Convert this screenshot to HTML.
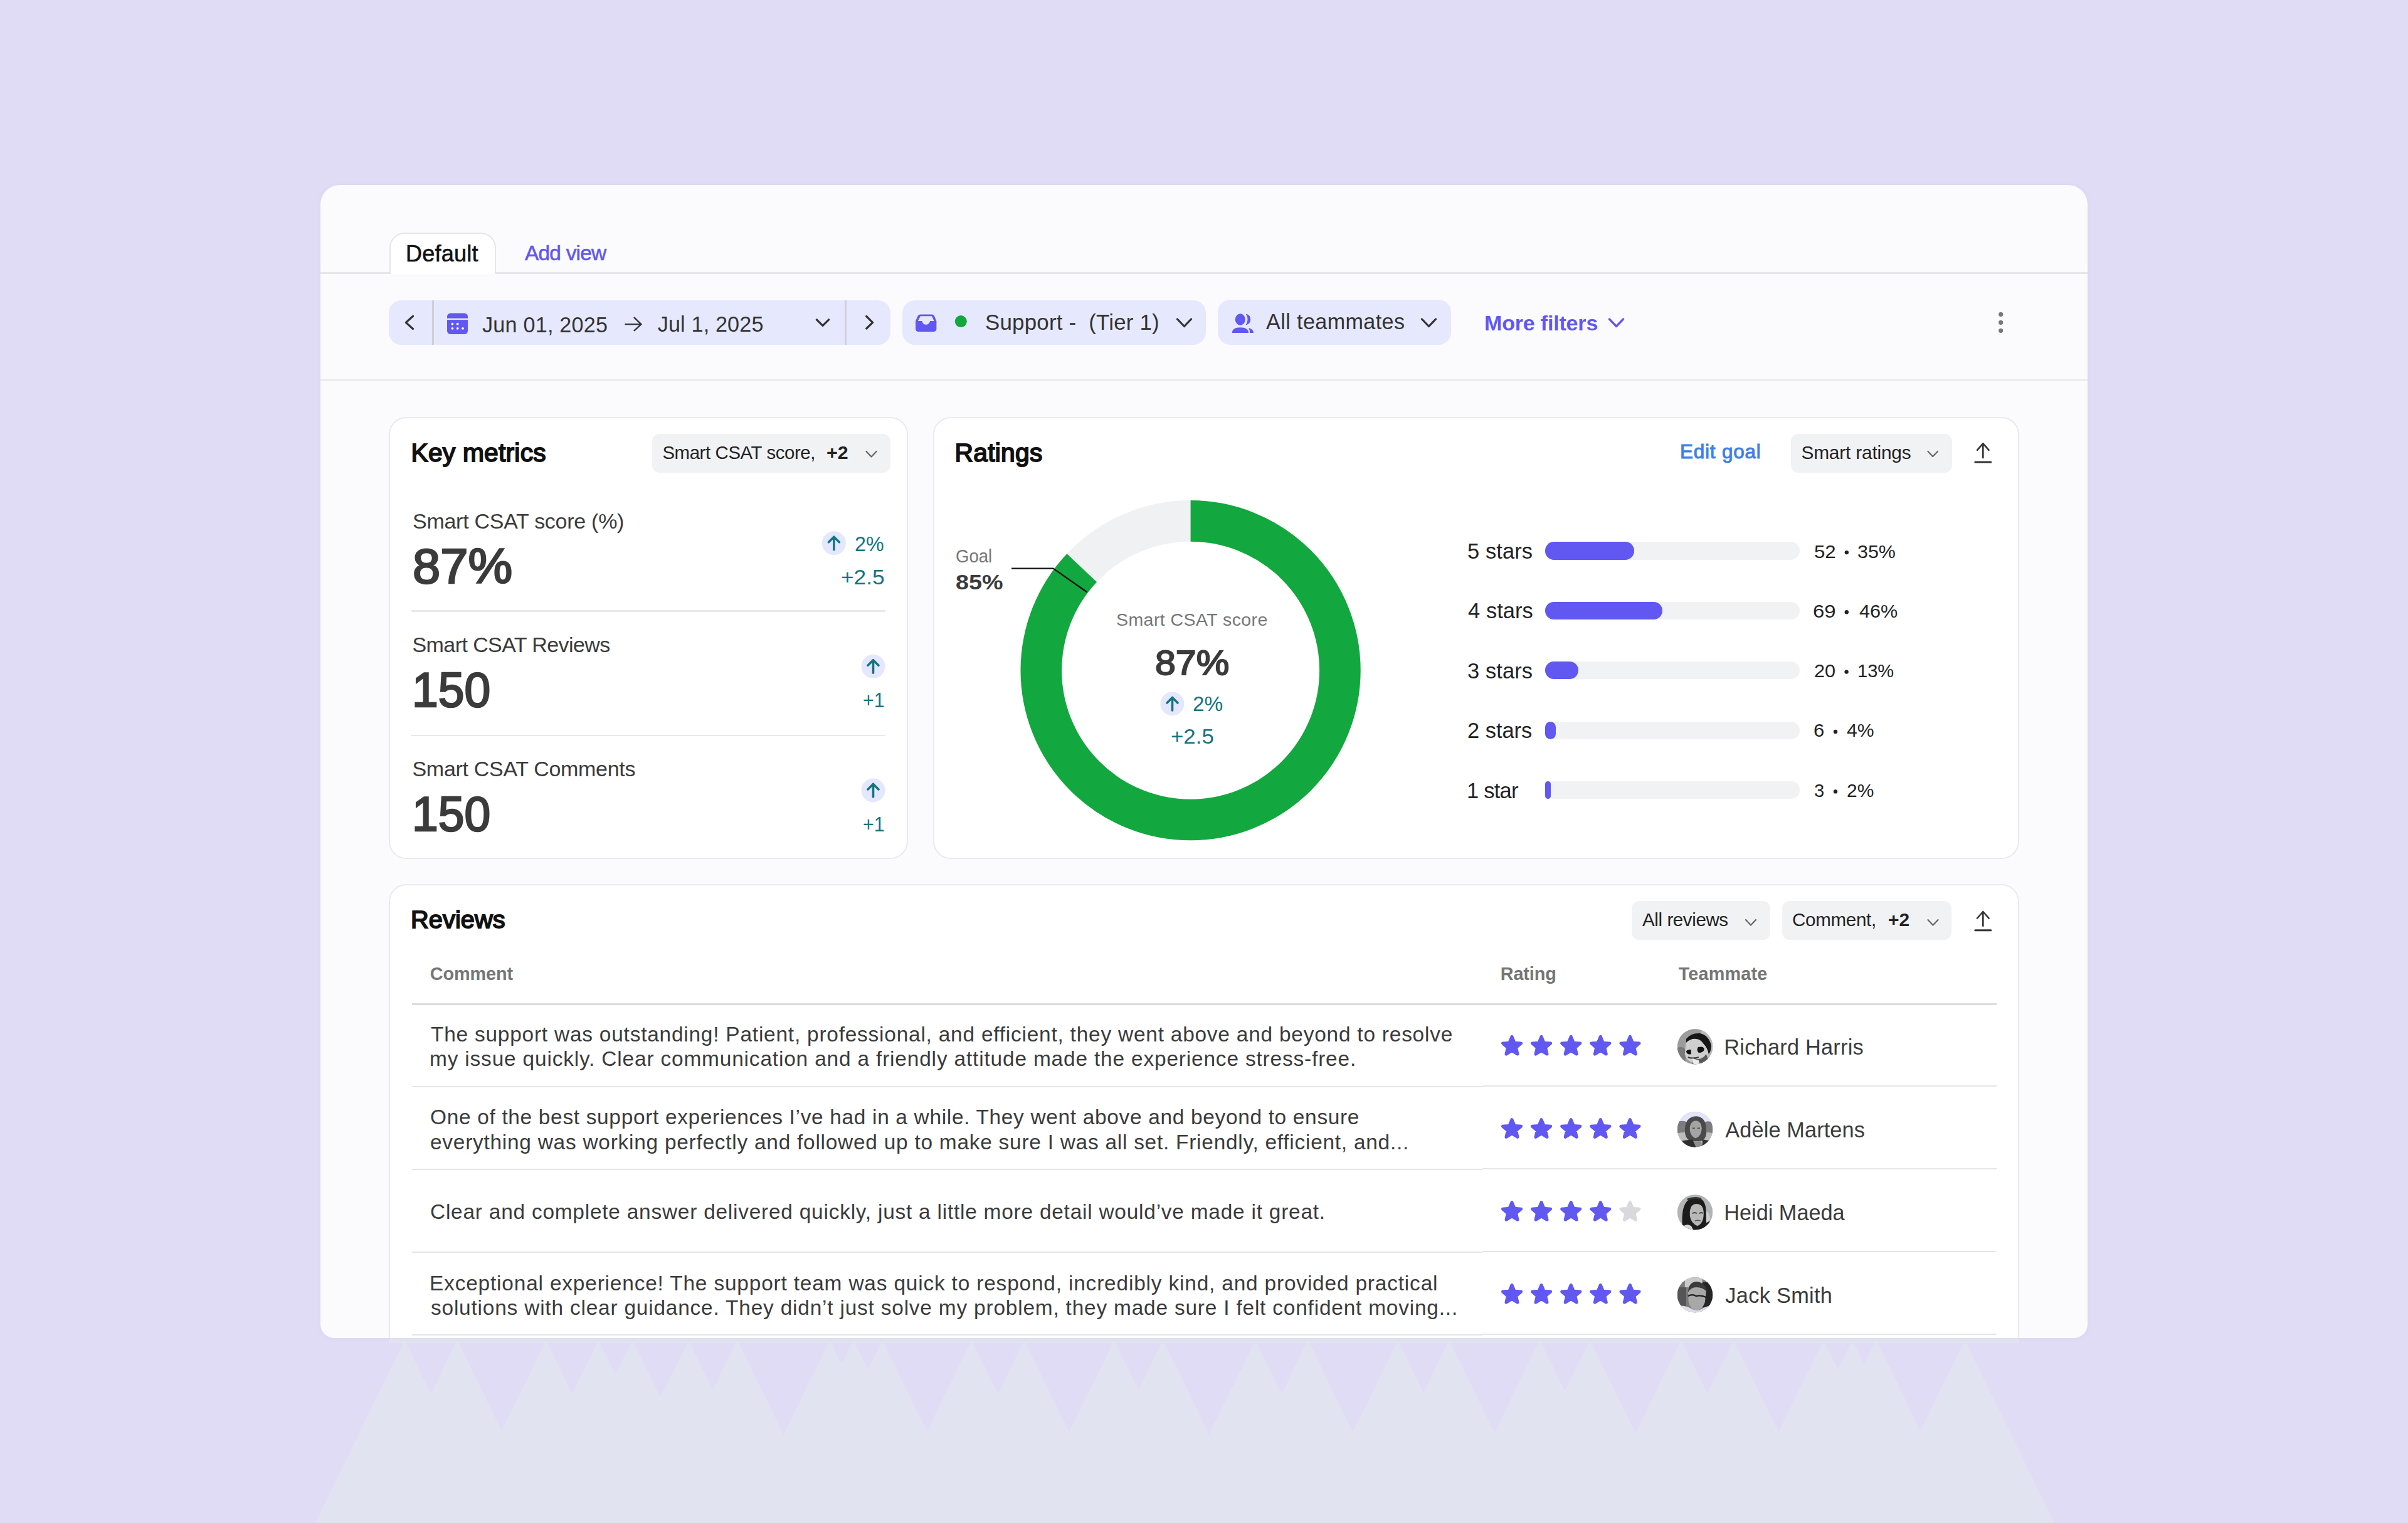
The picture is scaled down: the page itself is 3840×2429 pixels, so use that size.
<!DOCTYPE html>
<html><head><meta charset="utf-8"><title>Ratings dashboard</title>
<style>
html,body{margin:0;padding:0;}
body{width:3840px;height:2429px;background:#E1DCF5;position:relative;overflow:hidden;font-family:"Liberation Sans",sans-serif;}
.abs{position:absolute;}
.t{position:absolute;white-space:pre;line-height:1;font-family:"Liberation Sans",sans-serif;}
</style></head><body>
<svg class="abs" style="left:0;top:0" width="3840" height="2429"><polygon points="502.6,2429.0 645.4,2137.5 687.3,2223.0 729.2,2137.5 800.0,2281.9 870.7,2137.5 912.5,2222.9 954.4,2137.5 981.3,2192.4 1008.2,2137.5 1053.1,2229.1 1098.0,2137.5 1136.8,2216.8 1175.7,2137.5 1249.5,2288.0 1323.2,2137.5 1342.1,2176.1 1361.0,2137.5 1384.0,2184.4 1407.0,2137.5 1478.2,2282.9 1549.5,2137.5 1591.3,2222.9 1633.2,2137.5 1705.0,2283.9 1776.7,2137.5 1815.6,2216.9 1854.5,2137.5 1928.2,2288.0 2002.0,2137.5 2043.8,2222.9 2085.7,2137.5 2157.4,2283.9 2229.2,2137.5 2270.1,2221.0 2311.0,2137.5 2383.2,2284.9 2455.5,2137.5 2495.4,2218.9 2535.3,2137.5 2608.1,2286.0 2680.8,2137.5 2722.7,2222.9 2764.5,2137.5 2836.2,2283.9 2908.0,2137.5 2930.9,2184.3 2953.9,2137.5 2972.9,2176.2 2991.8,2137.5 3062.6,2281.9 3133.3,2137.5 3276.1,2429.0" fill="#E2E3F0"/><rect x="620.7" y="2133" width="2598.3" height="9" fill="#E2E3F0"/></svg>
<div class="abs" style="left:511px;top:295px;width:2818px;height:1838.5px;background:#FBFBFE;border-radius:31px 31px 22px 22px;overflow:hidden;box-shadow:0 0 7px rgba(90,70,170,0.06);">
<div class="abs" style="left:-511px;top:-295px;width:3840px;height:2429px;">
  <div class="abs" style="left:511px;top:434.3px;width:2818px;height:2.3px;background:#E6E6EB"></div>
  <div class="abs" style="left:620.6px;top:371px;width:166.9px;height:63.6px;background:#fff;border:2px solid #E6E6E9;border-bottom:none;border-radius:24px 24px 0 0;"></div>
  <div class="abs" style="left:511px;top:605.2px;width:2818px;height:2.3px;background:#E6E6EB"></div>
  <!-- date pill -->
  <div class="abs" style="left:619.5px;top:479px;width:800.5px;height:71px;background:#E6E9FD;border-radius:20px;"></div>
  <div class="abs" style="left:689.4px;top:479px;width:2.3px;height:71px;background:#CFCFD8"></div>
  <div class="abs" style="left:1347.4px;top:479px;width:2.3px;height:71px;background:#CFCFD8"></div>
  <div class="abs" style="left:1439px;top:478.6px;width:484px;height:71.5px;background:#E6E9FD;border-radius:20px;"></div>
  <div class="abs" style="left:1942.4px;top:478.3px;width:371.3px;height:72px;background:#E6E9FD;border-radius:20px;"></div>
  <!-- cards -->
  <div class="abs" style="left:620px;top:665px;width:824px;height:701px;background:#fff;border:2px solid #E9E9EE;border-radius:28px;"></div>
  <div class="abs" style="left:1487.5px;top:665px;width:1728.5px;height:701px;background:#fff;border:2px solid #E9E9EE;border-radius:28px;"></div>
  <div class="abs" style="left:620px;top:1410px;width:2596px;height:900px;background:#fff;border:2px solid #E9E9EE;border-radius:28px;"></div>
  <div class="abs" style="left:655.5px;top:973.4px;width:756.5px;height:2.2px;background:#E8E8EC"></div>
  <div class="abs" style="left:655.5px;top:1171.6px;width:756.5px;height:2.2px;background:#E8E8EC"></div>
  <!-- dropdowns -->
  <div class="abs" style="left:1039.6px;top:691.9px;width:380.8px;height:62.1px;background:#F1F2F4;border-radius:12px;"></div>
  <div class="abs" style="left:2856px;top:692.3px;width:256.8px;height:61.7px;background:#F1F2F4;border-radius:12px;"></div>
  <div class="abs" style="left:2601.8px;top:1436.7px;width:221.2px;height:62.2px;background:#F1F2F4;border-radius:12px;"></div>
  <div class="abs" style="left:2842.2px;top:1436.7px;width:270.3px;height:62.2px;background:#F1F2F4;border-radius:12px;"></div>
  <!-- table lines -->
  <div class="abs" style="left:657px;top:1600px;width:2527.3px;height:2.6px;background:#DCDCE1"></div>
  <div class="abs" style="left:657px;top:1732.1px;width:1707px;height:1.9px;background:#E5E6EA"></div>
  <div class="abs" style="left:2364px;top:1730.9px;width:820.3px;height:1.9px;background:#E5E6EA"></div>
  <div class="abs" style="left:657px;top:1863.9px;width:1707px;height:1.9px;background:#E5E6EA"></div>
  <div class="abs" style="left:2364px;top:1863.0px;width:820.3px;height:1.9px;background:#E5E6EA"></div>
  <div class="abs" style="left:657px;top:1996.1px;width:1707px;height:1.9px;background:#E5E6EA"></div>
  <div class="abs" style="left:2364px;top:1995.3px;width:820.3px;height:1.9px;background:#E5E6EA"></div>
  <div class="abs" style="left:657px;top:2127.7px;width:1707px;height:1.9px;background:#E5E6EA"></div>
  <div class="abs" style="left:2364px;top:2127.0px;width:820.3px;height:1.9px;background:#E5E6EA"></div>
  <div style="position:absolute;left:2464px;top:864.2px;width:405.7px;height:28.4px;border-radius:14.2px;background:#F1F2F4"></div><div style="position:absolute;left:2464px;top:864.2px;width:142.1px;height:28.4px;border-radius:14.2px;background:#6157F1"></div><div style="position:absolute;left:2464px;top:959.7px;width:405.7px;height:28.4px;border-radius:14.2px;background:#F1F2F4"></div><div style="position:absolute;left:2464px;top:959.7px;width:186.9px;height:28.4px;border-radius:14.2px;background:#6157F1"></div><div style="position:absolute;left:2464px;top:1055.1px;width:405.7px;height:28.4px;border-radius:14.2px;background:#F1F2F4"></div><div style="position:absolute;left:2464px;top:1055.1px;width:52.9px;height:28.4px;border-radius:14.2px;background:#6157F1"></div><div style="position:absolute;left:2464px;top:1150.8px;width:405.7px;height:28.4px;border-radius:14.2px;background:#F1F2F4"></div><div style="position:absolute;left:2464px;top:1150.8px;width:16.7px;height:28.4px;border-radius:14.2px;background:#6157F1"></div><div style="position:absolute;left:2464px;top:1246.1px;width:405.7px;height:28.4px;border-radius:14.2px;background:#F1F2F4"></div><div style="position:absolute;left:2464px;top:1246.1px;width:8.9px;height:28.4px;border-radius:14.2px;background:#6157F1"></div>
  <svg class="abs" style="left:0;top:0" width="3840" height="2429">
  <circle cx="1898.6" cy="1069.2" r="238.3" fill="none" stroke="#F0F1F3" stroke-width="65.6"/><circle cx="1898.6" cy="1069.2" r="238.3" fill="none" stroke="#13A83F" stroke-width="65.6" stroke-dasharray="1302.64 1497.28" transform="rotate(-90 1898.6 1069.2)"/><path d="M1613 906.6 H1679.5 L1733.3 944.2" fill="none" stroke="#111" stroke-width="2.4"/>
  <path d="M658.5 504.2 L647.4 514.4 L658.5 524.5" fill="none" stroke="#333333" stroke-width="3.2" stroke-linecap="round" stroke-linejoin="round"/><rect x="713" y="499.5" width="33" height="33.5" rx="5.5" fill="#6157F1"/><rect x="713" y="507.7" width="33" height="2.4" fill="#E6E9FD"/><circle cx="721.4" cy="516.7" r="1.9" fill="#fff"/><circle cx="729.7" cy="516.7" r="1.9" fill="#fff"/><circle cx="721.4" cy="523.8" r="1.9" fill="#fff"/><circle cx="729.7" cy="523.8" r="1.9" fill="#fff"/><circle cx="738" cy="523.8" r="1.9" fill="#fff"/><path d="M997.3 517.1 H1022 M1011.6 506.6 L1022.5 517.1 L1011.6 527.2" fill="none" stroke="#333333" stroke-width="2.4" stroke-linecap="round" stroke-linejoin="round"/><path d="M1302.4 509.8 L1312.0 519.4 L1321.6 509.8" fill="none" stroke="#333333" stroke-width="3.2" stroke-linecap="round" stroke-linejoin="round"/><path d="M1381.7 504.5 L1391.6 514.4 L1381.7 524" fill="none" stroke="#333333" stroke-width="3.2" stroke-linecap="round" stroke-linejoin="round"/><path d="M1467.5 501.5 H1486.5 Q1489 501.5 1490 504 L1493.4 512 V524 Q1493.4 529 1488.4 529 H1465 Q1460 529 1460 524 V512 L1463.5 504 Q1464.5 501.5 1467.5 501.5 Z" fill="#6157F1"/><path d="M1467.8 504.2 H1486 L1489.5 512 H1483.2 Q1481.5 517.8 1476.7 517.8 Q1471.9 517.8 1470.3 512 H1463.9 Z" fill="#E6E9FD"/><circle cx="1532.3" cy="512.6" r="9.5" fill="#13A83F"/><path d="M1877.5 509 L1888.5 520.5 L1899.5 509" fill="none" stroke="#333333" stroke-width="3.2" stroke-linecap="round" stroke-linejoin="round"/><ellipse cx="1977.8" cy="509.5" rx="8" ry="9.3" fill="#6157F1"/><path d="M1986.5 500.3 Q1994.2 502.5 1994.2 509.5 Q1994.2 516.5 1986.5 518.8 Q1989.5 514.5 1989.5 509.5 Q1989.5 504.5 1986.5 500.3 Z" fill="#6157F1"/><path d="M1964.8 531 Q1964.8 522.2 1978 522.2 Q1991 522.2 1991 531 Z" fill="#6157F1"/><path d="M1991.2 523 Q1999 525 1999 531 H1993 Q1993 526 1991.2 523 Z" fill="#6157F1"/><path d="M2267.5 509 L2278.5 520.5 L2289.5 509" fill="none" stroke="#333333" stroke-width="3.2" stroke-linecap="round" stroke-linejoin="round"/><path d="M2566.5 509 L2577.5 520.5 L2588.5 509" fill="none" stroke="#6157F1" stroke-width="3.4" stroke-linecap="round" stroke-linejoin="round"/><circle cx="3190.7" cy="501.3" r="3.6" fill="#777"/><circle cx="3190.7" cy="514.3" r="3.6" fill="#777"/><circle cx="3190.7" cy="527.3" r="3.6" fill="#777"/><path d="M1381.5 720 L1389.5 728.5 L1397.5 720" fill="none" stroke="#666" stroke-width="2.2" stroke-linecap="round" stroke-linejoin="round"/><circle cx="1329.9" cy="866.2" r="19" fill="#E4E7FD"/><path d="M1329.9 876.7 V856.2 M1321.4 864.7 L1329.9 856.2 L1338.4 864.7" fill="none" stroke="#137581" stroke-width="3.6" stroke-linecap="round" stroke-linejoin="round"/><circle cx="1392.5" cy="1062.7" r="19" fill="#E4E7FD"/><path d="M1392.5 1073.2 V1052.7 M1384.0 1061.2 L1392.5 1052.7 L1401.0 1061.2" fill="none" stroke="#137581" stroke-width="3.6" stroke-linecap="round" stroke-linejoin="round"/><circle cx="1392.5" cy="1260.4" r="19" fill="#E4E7FD"/><path d="M1392.5 1270.9 V1250.4 M1384.0 1258.9 L1392.5 1250.4 L1401.0 1258.9" fill="none" stroke="#137581" stroke-width="3.6" stroke-linecap="round" stroke-linejoin="round"/><path d="M3074.5 719.9 L3082.2 728.1 L3089.9 719.9" fill="none" stroke="#666" stroke-width="2.2" stroke-linecap="round" stroke-linejoin="round"/><path d="M3162.3 707.4 V730.1 M3153.0 717.9 L3162.3 707.4 L3171.6000000000004 717.9" fill="none" stroke="#333333" stroke-width="2.6" stroke-linecap="round" stroke-linejoin="round"/><path d="M3149.8 737.1 H3174.8" stroke="#333333" stroke-width="3" stroke-linecap="round"/><circle cx="1869.5" cy="1122.4" r="19" fill="#E4E7FD"/><path d="M1869.5 1132.9 V1112.4 M1861.0 1120.9 L1869.5 1112.4 L1878.0 1120.9" fill="none" stroke="#137581" stroke-width="3.6" stroke-linecap="round" stroke-linejoin="round"/><path d="M2784 1467 L2792.0 1475.5 L2800 1467" fill="none" stroke="#666" stroke-width="2.2" stroke-linecap="round" stroke-linejoin="round"/><path d="M3074.5 1467 L3082.5 1475.5 L3090.5 1467" fill="none" stroke="#666" stroke-width="2.2" stroke-linecap="round" stroke-linejoin="round"/><path d="M3162.3 1454 V1476.7 M3153.0 1464.5 L3162.3 1454 L3171.6000000000004 1464.5" fill="none" stroke="#333333" stroke-width="2.6" stroke-linecap="round" stroke-linejoin="round"/><path d="M3149.8 1483.7 H3174.8" stroke="#333333" stroke-width="3" stroke-linecap="round"/>
  <polygon points="2411.00,1653.40 2415.05,1663.13 2425.55,1663.97 2417.55,1670.83 2419.99,1681.08 2411.00,1675.59 2402.01,1681.08 2404.45,1670.83 2396.45,1663.97 2406.95,1663.13" fill="#6157F1" stroke="#6157F1" stroke-width="5" stroke-linejoin="round"/><polygon points="2458.00,1653.40 2462.05,1663.13 2472.55,1663.97 2464.55,1670.83 2466.99,1681.08 2458.00,1675.59 2449.01,1681.08 2451.45,1670.83 2443.45,1663.97 2453.95,1663.13" fill="#6157F1" stroke="#6157F1" stroke-width="5" stroke-linejoin="round"/><polygon points="2505.20,1653.40 2509.25,1663.13 2519.75,1663.97 2511.75,1670.83 2514.19,1681.08 2505.20,1675.59 2496.21,1681.08 2498.65,1670.83 2490.65,1663.97 2501.15,1663.13" fill="#6157F1" stroke="#6157F1" stroke-width="5" stroke-linejoin="round"/><polygon points="2552.30,1653.40 2556.35,1663.13 2566.85,1663.97 2558.85,1670.83 2561.29,1681.08 2552.30,1675.59 2543.31,1681.08 2545.75,1670.83 2537.75,1663.97 2548.25,1663.13" fill="#6157F1" stroke="#6157F1" stroke-width="5" stroke-linejoin="round"/><polygon points="2599.40,1653.40 2603.45,1663.13 2613.95,1663.97 2605.95,1670.83 2608.39,1681.08 2599.40,1675.59 2590.41,1681.08 2592.85,1670.83 2584.85,1663.97 2595.35,1663.13" fill="#6157F1" stroke="#6157F1" stroke-width="5" stroke-linejoin="round"/><polygon points="2411.00,1785.70 2415.05,1795.43 2425.55,1796.27 2417.55,1803.13 2419.99,1813.38 2411.00,1807.88 2402.01,1813.38 2404.45,1803.13 2396.45,1796.27 2406.95,1795.43" fill="#6157F1" stroke="#6157F1" stroke-width="5" stroke-linejoin="round"/><polygon points="2458.00,1785.70 2462.05,1795.43 2472.55,1796.27 2464.55,1803.13 2466.99,1813.38 2458.00,1807.88 2449.01,1813.38 2451.45,1803.13 2443.45,1796.27 2453.95,1795.43" fill="#6157F1" stroke="#6157F1" stroke-width="5" stroke-linejoin="round"/><polygon points="2505.20,1785.70 2509.25,1795.43 2519.75,1796.27 2511.75,1803.13 2514.19,1813.38 2505.20,1807.88 2496.21,1813.38 2498.65,1803.13 2490.65,1796.27 2501.15,1795.43" fill="#6157F1" stroke="#6157F1" stroke-width="5" stroke-linejoin="round"/><polygon points="2552.30,1785.70 2556.35,1795.43 2566.85,1796.27 2558.85,1803.13 2561.29,1813.38 2552.30,1807.88 2543.31,1813.38 2545.75,1803.13 2537.75,1796.27 2548.25,1795.43" fill="#6157F1" stroke="#6157F1" stroke-width="5" stroke-linejoin="round"/><polygon points="2599.40,1785.70 2603.45,1795.43 2613.95,1796.27 2605.95,1803.13 2608.39,1813.38 2599.40,1807.88 2590.41,1813.38 2592.85,1803.13 2584.85,1796.27 2595.35,1795.43" fill="#6157F1" stroke="#6157F1" stroke-width="5" stroke-linejoin="round"/><polygon points="2411.00,1917.60 2415.05,1927.33 2425.55,1928.17 2417.55,1935.03 2419.99,1945.28 2411.00,1939.78 2402.01,1945.28 2404.45,1935.03 2396.45,1928.17 2406.95,1927.33" fill="#6157F1" stroke="#6157F1" stroke-width="5" stroke-linejoin="round"/><polygon points="2458.00,1917.60 2462.05,1927.33 2472.55,1928.17 2464.55,1935.03 2466.99,1945.28 2458.00,1939.78 2449.01,1945.28 2451.45,1935.03 2443.45,1928.17 2453.95,1927.33" fill="#6157F1" stroke="#6157F1" stroke-width="5" stroke-linejoin="round"/><polygon points="2505.20,1917.60 2509.25,1927.33 2519.75,1928.17 2511.75,1935.03 2514.19,1945.28 2505.20,1939.78 2496.21,1945.28 2498.65,1935.03 2490.65,1928.17 2501.15,1927.33" fill="#6157F1" stroke="#6157F1" stroke-width="5" stroke-linejoin="round"/><polygon points="2552.30,1917.60 2556.35,1927.33 2566.85,1928.17 2558.85,1935.03 2561.29,1945.28 2552.30,1939.78 2543.31,1945.28 2545.75,1935.03 2537.75,1928.17 2548.25,1927.33" fill="#6157F1" stroke="#6157F1" stroke-width="5" stroke-linejoin="round"/><polygon points="2599.40,1917.60 2603.45,1927.33 2613.95,1928.17 2605.95,1935.03 2608.39,1945.28 2599.40,1939.78 2590.41,1945.28 2592.85,1935.03 2584.85,1928.17 2595.35,1927.33" fill="#D9D9DD" stroke="#D9D9DD" stroke-width="5" stroke-linejoin="round"/><polygon points="2411.00,2049.50 2415.05,2059.23 2425.55,2060.07 2417.55,2066.93 2419.99,2077.18 2411.00,2071.69 2402.01,2077.18 2404.45,2066.93 2396.45,2060.07 2406.95,2059.23" fill="#6157F1" stroke="#6157F1" stroke-width="5" stroke-linejoin="round"/><polygon points="2458.00,2049.50 2462.05,2059.23 2472.55,2060.07 2464.55,2066.93 2466.99,2077.18 2458.00,2071.69 2449.01,2077.18 2451.45,2066.93 2443.45,2060.07 2453.95,2059.23" fill="#6157F1" stroke="#6157F1" stroke-width="5" stroke-linejoin="round"/><polygon points="2505.20,2049.50 2509.25,2059.23 2519.75,2060.07 2511.75,2066.93 2514.19,2077.18 2505.20,2071.69 2496.21,2077.18 2498.65,2066.93 2490.65,2060.07 2501.15,2059.23" fill="#6157F1" stroke="#6157F1" stroke-width="5" stroke-linejoin="round"/><polygon points="2552.30,2049.50 2556.35,2059.23 2566.85,2060.07 2558.85,2066.93 2561.29,2077.18 2552.30,2071.69 2543.31,2077.18 2545.75,2066.93 2537.75,2060.07 2548.25,2059.23" fill="#6157F1" stroke="#6157F1" stroke-width="5" stroke-linejoin="round"/><polygon points="2599.40,2049.50 2603.45,2059.23 2613.95,2060.07 2605.95,2066.93 2608.39,2077.18 2599.40,2071.69 2590.41,2077.18 2592.85,2066.93 2584.85,2060.07 2595.35,2059.23" fill="#6157F1" stroke="#6157F1" stroke-width="5" stroke-linejoin="round"/>
  <circle cx="2944.8" cy="881.1" r="3.2" fill="#222"/><circle cx="2944.8" cy="976.2" r="3.2" fill="#222"/><circle cx="2944.6" cy="1071.6" r="3.2" fill="#222"/><circle cx="2927" cy="1167.0" r="3.2" fill="#222"/><circle cx="2927" cy="1262.4" r="3.2" fill="#222"/>
  <clipPath id="av0"><circle cx="2703" cy="1669.3" r="28.2"/></clipPath><g clip-path="url(#av0)"><g transform="translate(2674.8 1641.1)"><rect width="57" height="57" fill="#9c9c9c"/><rect x="38" width="19" height="57" fill="#b9b9b9"/><path d="M0 30 Q8 26 14 34 L12 57 H0 Z" fill="#7a7a7a"/><path d="M14 18 Q20 8 34 8 Q48 10 52 26 L48 42 Q40 54 24 54 Q14 50 12 40 Z" fill="#cfcfcf"/><path d="M26 46 Q38 52 46 40 L52 57 H24 Z" fill="#5a5a5a"/><path d="M14 16 Q22 6 36 7 Q50 10 54 26 Q54 36 50 40 Q48 30 42 24 Q36 14 24 16 Q18 18 14 22 Z" fill="#161616"/><path d="M22 33 Q16 32 14 36 Q16 42 22 40 Z" fill="#111"/><path d="M33 29 Q42 27 43 32 Q42 38 34 38 Q30 34 33 29 Z" fill="#111"/><path d="M17 45 Q24 48 34 45" stroke="#333" stroke-width="2" fill="none"/><path d="M24 47 L26 57 H36 L34 50 Z" fill="#ececec"/></g></g><clipPath id="av1"><circle cx="2703" cy="1801.4" r="28.2"/></clipPath><g clip-path="url(#av1)"><g transform="translate(2674.8 1773.2)"><rect width="57" height="57" fill="#a9a9ab"/><rect width="57" height="16" fill="#e2e4fa"/><path d="M0 16 Q12 12 20 20 L20 30 L0 34 Z" fill="#7c7c7c"/><path d="M40 18 Q50 12 57 18 V34 L40 30 Z" fill="#7c7c7c"/><path d="M0 34 H57 V57 H0 Z" fill="#bdbdbf"/><path d="M12 30 Q12 8 30 7 Q46 8 46 28 Q48 40 40 46 Q30 48 20 46 Q12 42 12 30 Z" fill="#4a4a4a"/><path d="M20 24 Q22 14 30 14 Q38 15 39 26 Q38 40 29 42 Q22 40 20 30 Z" fill="#a4a4a4"/><path d="M24 26 H28 M32 26 H36" stroke="#444" stroke-width="1.6"/><path d="M23 45 Q29 50 36 46 L44 57 H16 Z" fill="#8e8e8e"/><path d="M8 46 L24 44 L30 57 H8 Z" fill="#2e2e2e"/><path d="M40 44 L52 46 L48 57 H40 Z" fill="#333"/></g></g><clipPath id="av2"><circle cx="2703" cy="1933.4" r="28.2"/></clipPath><g clip-path="url(#av2)"><g transform="translate(2674.8 1905.2)"><rect width="57" height="57" fill="#b2b4b6"/><path d="M8 50 Q6 20 16 10 Q26 2 36 6 Q46 10 46 30 L48 57 H10 Z" fill="#1c1c1c"/><path d="M16 8 Q28 3 38 7" stroke="#333" stroke-width="3" fill="none"/><path d="M20 26 Q22 14 32 15 Q42 16 42 30 Q42 46 32 50 Q22 46 20 34 Z" fill="#b8b8b8"/><path d="M24 30 Q28 28 31 30 M35 30 Q38 28 41 30" stroke="#333" stroke-width="1.8" fill="none"/><path d="M28 42 Q33 40 37 42" stroke="#555" stroke-width="1.6" fill="none"/><path d="M10 50 Q16 46 22 50 L26 57 H10 Z" fill="#d8d8d8"/><path d="M46 26 Q52 30 52 40 L46 48 Z" fill="#d0d0d0"/><path d="M44 46 L52 42 L50 50 Z" fill="#222"/></g></g><clipPath id="av3"><circle cx="2703" cy="2065.3" r="28.2"/></clipPath><g clip-path="url(#av3)"><g transform="translate(2674.8 2037.1)"><rect width="57" height="57" fill="#7a7a7a"/><rect x="12" width="28" height="16" fill="#c9c9c9"/><rect x="0" y="16" width="14" height="30" fill="#555"/><rect x="40" y="8" width="17" height="40" fill="#252525"/><path d="M17 22 Q19 8 30 8 Q44 9 46 22 L44 40 Q40 52 31 53 Q21 52 18 40 Z" fill="#a8a8a8"/><path d="M17 24 Q18 8 30 7 Q46 8 47 24 Q42 16 30 16 Q22 16 17 24 Z" fill="#3a3a3a"/><path d="M17 30 Q24 26 30 30 Q38 28 46 32" stroke="#1e1e1e" stroke-width="2.2" fill="none"/><path d="M0 46 Q12 44 22 50 Q31 56 40 50 Q50 44 57 46 V57 H0 Z" fill="#dedce8"/></g></g>
  </svg>
  <div class="t" style="left:647.0px;top:386.7px;font-size:36.05px;font-weight:400;color:#111111;letter-spacing:0.22px;-webkit-text-stroke:0.6px #111111;">Default</div>
<div class="t" style="left:837.0px;top:386.5px;font-size:33.43px;font-weight:400;color:#6157F1;letter-spacing:-0.78px;-webkit-text-stroke:0.6px #6157F1;">Add view</div>
<div class="t" style="left:769.0px;top:500.5px;font-size:34.16px;font-weight:400;color:#333333;letter-spacing:0.23px;">Jun 01, 2025</div>
<div class="t" style="left:1048.7px;top:500.4px;font-size:34.16px;font-weight:400;color:#333333;letter-spacing:0.16px;">Jul 1, 2025</div>
<div class="t" style="left:1571.0px;top:496.9px;font-size:34.88px;font-weight:400;color:#333333;letter-spacing:0.21px;">Support -  (Tier 1)</div>
<div class="t" style="left:2019.0px;top:496.4px;font-size:34.16px;font-weight:400;color:#333333;letter-spacing:0.39px;">All teammates</div>
<div class="t" style="left:2367.0px;top:498.1px;font-size:34.01px;font-weight:700;color:#6157F1;letter-spacing:-0.18px;">More filters</div>
<div class="t" style="left:655.5px;top:702.3px;font-size:40.7px;font-weight:400;color:#111111;letter-spacing:0.26px;-webkit-text-stroke:1.9px #111111;">Key metrics</div>
<div class="t" style="left:1056.4px;top:707.4px;font-size:29.36px;font-weight:400;color:#222;letter-spacing:-0.38px;">Smart CSAT score,</div>
<div class="t" style="left:1318.3px;top:707.4px;font-size:29.36px;font-weight:700;color:#222;transform:scaleX(1.0328);transform-origin:0 0;">+2</div>
<div class="t" style="left:658.0px;top:813.7px;font-size:34.01px;font-weight:400;color:#3B3B3B;letter-spacing:-0.27px;">Smart CSAT score (%)</div>
<div class="t" style="left:657.9px;top:864.4px;font-size:78.05px;font-weight:400;color:#3B3B3B;transform:scaleX(1.0185);transform-origin:0 0;-webkit-text-stroke:2.6px #3B3B3B;">87%</div>
<div class="t" style="left:1362.9px;top:850.0px;font-size:34.01px;font-weight:400;color:#137581;transform:scaleX(0.9455);transform-origin:0 0;">2%</div>
<div class="t" style="left:1340.8px;top:902.5px;font-size:34.01px;font-weight:400;color:#137581;transform:scaleX(1.0382);transform-origin:0 0;">+2.5</div>
<div class="t" style="left:657.5px;top:1010.9px;font-size:34.01px;font-weight:400;color:#3B3B3B;letter-spacing:-0.58px;">Smart CSAT Reviews</div>
<div class="t" style="left:656.7px;top:1061.4px;font-size:78.05px;font-weight:400;color:#3B3B3B;transform:scaleX(0.9608);transform-origin:0 0;-webkit-text-stroke:2.6px #3B3B3B;">150</div>
<div class="t" style="left:1375.7px;top:1099.2px;font-size:34.01px;font-weight:400;color:#137581;transform:scaleX(0.8927);transform-origin:0 0;">+1</div>
<div class="t" style="left:657.5px;top:1208.9px;font-size:34.01px;font-weight:400;color:#3B3B3B;letter-spacing:-0.31px;">Smart CSAT Comments</div>
<div class="t" style="left:656.7px;top:1259.1px;font-size:78.05px;font-weight:400;color:#3B3B3B;transform:scaleX(0.9608);transform-origin:0 0;-webkit-text-stroke:2.6px #3B3B3B;">150</div>
<div class="t" style="left:1375.7px;top:1296.6px;font-size:34.01px;font-weight:400;color:#137581;transform:scaleX(0.8927);transform-origin:0 0;">+1</div>
<div class="t" style="left:1522.5px;top:702.3px;font-size:40.7px;font-weight:400;color:#111111;letter-spacing:0.31px;-webkit-text-stroke:1.9px #111111;">Ratings</div>
<div class="t" style="left:2679.0px;top:705.2px;font-size:31.4px;font-weight:400;color:#3E7FEA;letter-spacing:0.83px;-webkit-text-stroke:1px #3E7FEA;">Edit goal</div>
<div class="t" style="left:2872.5px;top:707.2px;font-size:29.8px;font-weight:400;color:#222;letter-spacing:-0.17px;">Smart ratings</div>
<div class="t" style="left:1524.1px;top:872.8px;font-size:29.07px;font-weight:400;color:#767676;transform:scaleX(0.9469);transform-origin:0 0;">Goal</div>
<div class="t" style="left:1524.4px;top:910.9px;font-size:34.01px;font-weight:700;color:#3B3B3B;transform:scaleX(1.1105);transform-origin:0 0;">85%</div>
<div class="t" style="left:1780.0px;top:974.1px;font-size:28.49px;font-weight:400;color:#767676;letter-spacing:0.44px;">Smart CSAT score</div>
<div class="t" style="left:1841.9px;top:1029.0px;font-size:56.4px;font-weight:400;color:#3B3B3B;transform:scaleX(1.0481);transform-origin:0 0;-webkit-text-stroke:2px #3B3B3B;">87%</div>
<div class="t" style="left:1902.0px;top:1106.8px;font-size:32.85px;font-weight:400;color:#137581;transform:scaleX(1.0161);transform-origin:0 0;">2%</div>
<div class="t" style="left:1867.4px;top:1158.9px;font-size:32.85px;font-weight:400;color:#137581;transform:scaleX(1.0616);transform-origin:0 0;">+2.5</div>
<div class="t" style="left:2340.0px;top:861.8px;font-size:34.45px;font-weight:400;color:#222;letter-spacing:0.10px;">5 stars</div>
<div class="t" style="left:2341.0px;top:957.4px;font-size:34.45px;font-weight:400;color:#222;letter-spacing:0.08px;">4 stars</div>
<div class="t" style="left:2340.0px;top:1052.8px;font-size:34.45px;font-weight:400;color:#222;letter-spacing:0.10px;">3 stars</div>
<div class="t" style="left:2340.0px;top:1148.1px;font-size:34.45px;font-weight:400;color:#222;letter-spacing:-0.02px;">2 stars</div>
<div class="t" style="left:2339.0px;top:1243.7px;font-size:34.45px;font-weight:400;color:#222;letter-spacing:-0.75px;">1 star</div>
<div class="t" style="left:2893.1px;top:864.5px;font-size:29.36px;font-weight:400;color:#222;transform:scaleX(1.0617);transform-origin:0 0;">52</div>
<div class="t" style="left:2962.2px;top:864.5px;font-size:29.36px;font-weight:400;color:#222;transform:scaleX(1.0354);transform-origin:0 0;">35%</div>
<div class="t" style="left:2891.3px;top:959.6px;font-size:29.36px;font-weight:400;color:#222;transform:scaleX(1.1211);transform-origin:0 0;">69</div>
<div class="t" style="left:2965.0px;top:959.6px;font-size:29.36px;font-weight:400;color:#222;transform:scaleX(1.0417);transform-origin:0 0;">46%</div>
<div class="t" style="left:2892.9px;top:1055.0px;font-size:29.36px;font-weight:400;color:#222;transform:scaleX(1.0406);transform-origin:0 0;">20</div>
<div class="t" style="left:2961.5px;top:1055.0px;font-size:29.36px;font-weight:400;color:#222;transform:scaleX(0.9884);transform-origin:0 0;">13%</div>
<div class="t" style="left:2892.3px;top:1150.4px;font-size:29.36px;font-weight:400;color:#222;transform:scaleX(1.0533);transform-origin:0 0;">6</div>
<div class="t" style="left:2944.6px;top:1150.4px;font-size:29.36px;font-weight:400;color:#222;transform:scaleX(1.0253);transform-origin:0 0;">4%</div>
<div class="t" style="left:2892.9px;top:1245.8px;font-size:29.36px;font-weight:400;color:#222;transform:scaleX(0.9933);transform-origin:0 0;">3</div>
<div class="t" style="left:2944.9px;top:1245.8px;font-size:29.36px;font-weight:400;color:#222;transform:scaleX(1.0187);transform-origin:0 0;">2%</div>
<div class="t" style="left:655.0px;top:1446.6px;font-size:39.68px;font-weight:400;color:#111111;letter-spacing:0.12px;-webkit-text-stroke:1.9px #111111;">Reviews</div>
<div class="t" style="left:2619.0px;top:1451.5px;font-size:29.51px;font-weight:400;color:#222;letter-spacing:-0.39px;">All reviews</div>
<div class="t" style="left:2858.0px;top:1451.5px;font-size:29.51px;font-weight:400;color:#222;letter-spacing:-0.27px;">Comment,</div>
<div class="t" style="left:3011.0px;top:1451.5px;font-size:29.51px;font-weight:700;color:#222;transform:scaleX(1.0147);transform-origin:0 0;">+2</div>
<div class="t" style="left:685.7px;top:1538.7px;font-size:28.78px;font-weight:700;color:#767676;letter-spacing:-0.03px;">Comment</div>
<div class="t" style="left:2392.7px;top:1539.1px;font-size:28.78px;font-weight:700;color:#767676;letter-spacing:-0.08px;">Rating</div>
<div class="t" style="left:2676.7px;top:1539.1px;font-size:28.78px;font-weight:700;color:#767676;letter-spacing:0.21px;">Teammate</div>
<div class="t" style="left:687.0px;top:1632.7px;font-size:33.43px;font-weight:400;color:#3B3B3B;letter-spacing:0.78px;">The support was outstanding! Patient, professional, and efficient, they went above and beyond to resolve</div>
<div class="t" style="left:685.0px;top:1672.0px;font-size:33.43px;font-weight:400;color:#3B3B3B;letter-spacing:0.83px;">my issue quickly. Clear communication and a friendly attitude made the experience stress-free.</div>
<div class="t" style="left:686.0px;top:1765.3px;font-size:33.43px;font-weight:400;color:#3B3B3B;letter-spacing:0.68px;">One of the best support experiences I’ve had in a while. They went above and beyond to ensure</div>
<div class="t" style="left:686.0px;top:1804.5px;font-size:33.43px;font-weight:400;color:#3B3B3B;letter-spacing:0.75px;">everything was working perfectly and followed up to make sure I was all set. Friendly, efficient, and...</div>
<div class="t" style="left:686.0px;top:1916.3px;font-size:33.43px;font-weight:400;color:#3B3B3B;letter-spacing:0.77px;">Clear and complete answer delivered quickly, just a little more detail would’ve made it great.</div>
<div class="t" style="left:685.0px;top:2029.9px;font-size:33.43px;font-weight:400;color:#3B3B3B;letter-spacing:0.82px;">Exceptional experience! The support team was quick to respond, incredibly kind, and provided practical</div>
<div class="t" style="left:687.0px;top:2068.5px;font-size:33.43px;font-weight:400;color:#3B3B3B;letter-spacing:0.80px;">solutions with clear guidance. They didn’t just solve my problem, they made sure I felt confident moving...</div>
<div class="t" style="left:2749.3px;top:1652.9px;font-size:34.3px;font-weight:400;color:#3B3B3B;letter-spacing:0.25px;">Richard Harris</div>
<div class="t" style="left:2751.3px;top:1785.2px;font-size:34.3px;font-weight:400;color:#3B3B3B;letter-spacing:0.12px;">Adèle Martens</div>
<div class="t" style="left:2749.3px;top:1917.3px;font-size:34.3px;font-weight:400;color:#3B3B3B;letter-spacing:-0.02px;">Heidi Maeda</div>
<div class="t" style="left:2751.3px;top:2049.2px;font-size:34.3px;font-weight:400;color:#3B3B3B;letter-spacing:0.32px;">Jack Smith</div>
</div>
</div>
</body></html>
